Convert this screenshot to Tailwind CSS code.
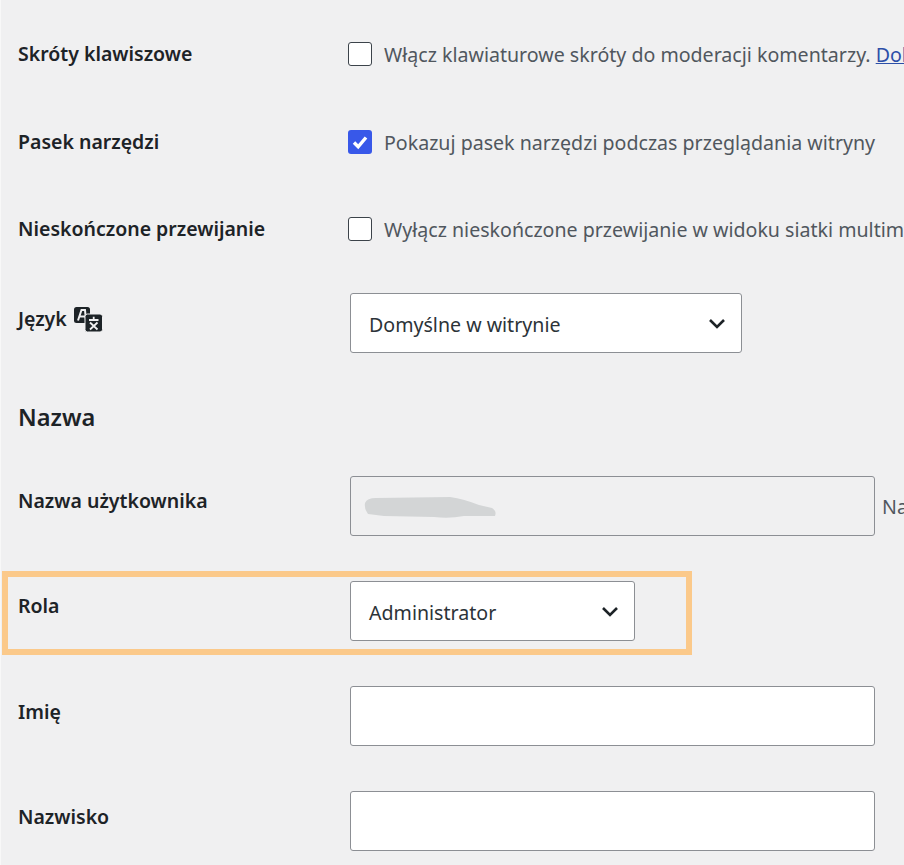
<!DOCTYPE html>
<html lang="pl">
<head>
  <meta charset="UTF-8" />
  <title>Profil</title>
  <script src="https://cdn.jsdelivr.net/npm/@tailwindcss/browser@4"></script>
</head>
<body class="bg-[#f0f0f1] text-[#1d2327] font-['Noto_Sans','Open_Sans',sans-serif] overflow-hidden">
  <div class="relative w-[904px] h-[865px] overflow-hidden border-l border-[#f8f8f8] pl-[17px] pt-[42px]">

    <!-- checkboxy -->
    <div class="flex items-center h-6 mb-[64px] whitespace-nowrap">
      <div class="w-[330px] shrink-0 text-[19.5px] font-semibold">Skróty klawiszowe</div>
      <span class="w-6 h-6 shrink-0 bg-white border border-[#3c434a] rounded-[3px]"></span>
      <span class="ml-3 mt-[2px] text-[19.6px] text-[#50575e]">Włącz klawiaturowe skróty do moderacji komentarzy. <a class="text-[#2c4fa8] underline">Dokumentacja</a></span>
    </div>
    <div class="flex items-center h-6 mb-[63px] whitespace-nowrap">
      <div class="w-[330px] shrink-0 text-[19.5px] font-semibold">Pasek narzędzi</div>
      <span class="w-6 h-6 shrink-0 bg-[#3858e9] rounded-[3px] flex items-center justify-center">
        <svg viewBox="0 0 24 24" class="w-6 h-6" fill="none" stroke="#fff" stroke-width="3.4"><path d="M6 12.5l4.2 4.3L18 7.5" /></svg>
      </span>
      <span class="ml-3 mt-[2px] text-[19.6px] text-[#50575e]">Pokazuj pasek narzędzi podczas przeglądania witryny</span>
    </div>
    <div class="flex items-center h-6 mb-[52px] whitespace-nowrap">
      <div class="w-[330px] shrink-0 text-[19.5px] font-semibold">Nieskończone przewijanie</div>
      <span class="w-6 h-6 shrink-0 bg-white border border-[#3c434a] rounded-[3px]"></span>
      <span class="ml-3 mt-[2px] text-[19.6px] text-[#50575e]">Wyłącz nieskończone przewijanie w widoku siatki multimediów</span>
    </div>

    <!-- jezyk -->
    <div class="flex items-center h-[60px] mb-[49px]">
      <div class="w-[332px] shrink-0 flex items-center gap-[6px] text-[19.5px] font-semibold -mt-[8px]">
        <span>Język</span>
        <svg viewBox="0 0 30 26" class="w-[30px] h-[26px] mt-[2px]">
          <rect x="1" y="0" width="16" height="16" rx="2.5" fill="#1d2327" />
          <path d="M5 13.5L8.5 3h3.5L13 13.5M7 9.5h5" fill="none" stroke="#f0f0f1" stroke-width="2" />
          <rect x="12" y="7" width="17.5" height="18" rx="2.5" fill="#1d2327" stroke="#f0f0f1" stroke-width="1" />
          <path d="M16 13h9.500M20.700 9.800v3.200M17 15.500l7.500 7M24.500 15.500l-7.500 7" fill="none" stroke="#f0f0f1" stroke-width="1.800" />
        </svg>
      </div>
      <div class="w-[392px] h-[60px] bg-white border border-[#8c8f94] rounded-[3px] flex items-center justify-between pl-[18px] pr-[15px]">
        <span class="mt-[3px] text-[19.6px] text-[#2c3338]">Domyślne w witrynie</span>
        <svg viewBox="0 0 18 12" class="w-[18px] h-3 mt-[1px]" fill="none" stroke="#1d2327" stroke-width="2.6"><path d="M2 2l7 7 7-7" /></svg>
      </div>
    </div>

    <h2 class="text-[23.6px] font-semibold leading-[30px] mb-[44px]">Nazwa</h2>

    <!-- nazwa uzytkownika -->
    <div class="flex items-center h-[60px] mb-[45px] whitespace-nowrap">
      <div class="w-[332px] shrink-0 text-[19.5px] font-semibold -mt-[10px]">Nazwa użytkownika</div>
      <div class="w-[525px] shrink-0 h-[60px] border border-[#8c8f94] rounded-[3px] bg-[#f0f0f1] flex items-center pl-[13px]">
        <svg viewBox="0 0 134 26" class="w-[134px] h-[26px] mt-[3px] blur-[0.6px]"><path d="M1 8Q3 3 12 3L86 2Q100 4 115 10L128 13Q133 16 131 21L100 21Q85 24 70 22L20 21L4 19Q0 14 1 8Z" fill="#d3d5d6" /></svg>
      </div>
      <span class="ml-[7px] mt-[2px] text-[19.6px] text-[#50575e]">Nazwy użytkownika nie można zmienić.</span>
    </div>

    <!-- rola -->
    <div class="flex items-center h-[60px] mb-[45px]">
      <div class="w-[332px] shrink-0 text-[19.5px] font-semibold -mt-[10px]">Rola</div>
      <div class="w-[285px] h-[60px] bg-white border border-[#8c8f94] rounded-[3px] flex items-center justify-between pl-[18px] pr-[15px]">
        <span class="mt-[3px] text-[19.6px] text-[#2c3338]">Administrator</span>
        <svg viewBox="0 0 18 12" class="w-[18px] h-3 mt-[1px]" fill="none" stroke="#1d2327" stroke-width="2.6"><path d="M2 2l7 7 7-7" /></svg>
      </div>
    </div>

    <!-- imie -->
    <div class="flex items-center h-[60px] mb-[45px]">
      <div class="w-[332px] shrink-0 text-[19.5px] font-semibold -mt-[8px]">Imię</div>
      <div class="w-[525px] h-[60px] bg-white border border-[#8c8f94] rounded-[3px]"></div>
    </div>

    <!-- nazwisko -->
    <div class="flex items-center h-[60px]">
      <div class="w-[332px] shrink-0 text-[19.5px] font-semibold -mt-[9px]">Nazwisko</div>
      <div class="w-[525px] h-[60px] bg-white border border-[#8c8f94] rounded-[3px]"></div>
    </div>

    <!-- zaznaczenie na screenie -->
    <div class="absolute left-[1px] top-[571px] w-[690px] h-[84px] border-[6px] border-[#fbc98a] pointer-events-none"></div>
  </div>
</body>
</html>
